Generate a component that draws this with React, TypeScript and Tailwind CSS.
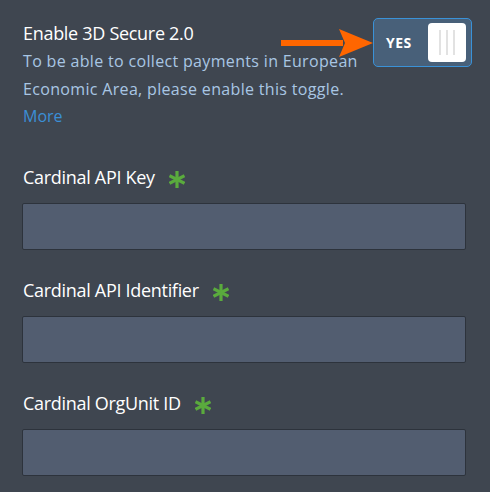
import React from "react";

const fields = ["Cardinal API Key", "Cardinal API Identifier", "Cardinal OrgUnit ID"];

function Star() {
    return (
        <svg width="16" height="17" viewBox="0 0 16 17" className="ml-[14px] mt-[3px]">
            <g stroke="#5aab3d" strokeWidth="3.2" strokeLinecap="butt">
                <line x1="8" y1="0" x2="8" y2="17" />
                <line x1="0.5" y1="4.8" x2="15.5" y2="12.2" />
                <line x1="15.5" y1="4.8" x2="0.5" y2="12.2" />
            </g>
        </svg>
    );
}

export default function App() {
    return (
        <main
            className="w-[490px] h-[492px] bg-[#3f4650] overflow-hidden relative"
            style={{ fontFamily: '"Open Sans", "Noto Sans", sans-serif' }}
        >
            {/* 3D Secure toggle row */}
            <div className="flex justify-between pl-[23px] pr-[19px] pt-[18px]">
                <div className="pt-[2px]">
                    <h2 className="text-[18px] text-white leading-[27px] tracking-[-0.3px]">Enable 3D Secure 2.0</h2>
                    <p className="text-[16px] leading-[28px] text-[#a9c6e4] w-[350px] tracking-[0.33px]">
                        To be able to collect payments in European Economic Area, please enable this toggle.
                    </p>
                    <a className="text-[16px] leading-[26px] text-[#3b8fd6]">More</a>
                </div>
                <div className="relative">
                    <div className="w-[99px] h-[49px] rounded-[5px] border-[1.5px] border-[#3a92d8] bg-[#486079] flex items-center justify-between pl-[12px] pr-[5px]">
                        <span className="text-white font-bold text-[14px] tracking-[0.5px]">YES</span>
                        <div className="w-[38px] h-[39px] bg-white rounded-[4px] flex items-center justify-center gap-[5px]">
                            <span className="w-[2px] h-[25px] bg-[#e2e2e2]" />
                            <span className="w-[2px] h-[25px] bg-[#e2e2e2]" />
                            <span className="w-[2px] h-[25px] bg-[#e2e2e2]" />
                        </div>
                    </div>
                    {/* pointer arrow */}
                    <svg width="95" height="30" viewBox="0 0 95 30" className="absolute left-[-94px] top-[10px]">
                        <rect x="2" y="12" width="62" height="6" fill="#ff6600" />
                        <polygon points="60,1 94,15 60,29 66,15" fill="#ff6600" />
                    </svg>
                </div>
            </div>

            {/* Cardinal fields */}
            <div className="flex flex-col px-[22px] mt-[39px] gap-[31px]">
                {fields.map((f) => (
                    <div key={f}>
                        <div className="flex items-start pl-[1px] h-[35px]">
                            <span className="text-[18px] text-white leading-[18px] tracking-[-0.3px]">{f}</span>
                            <Star />
                        </div>
                        <div className="h-[47px] w-[444px] bg-[#525d70] border border-[#2d333c] rounded-[2px]" />
                    </div>
                ))}
            </div>
        </main>
    );
}
